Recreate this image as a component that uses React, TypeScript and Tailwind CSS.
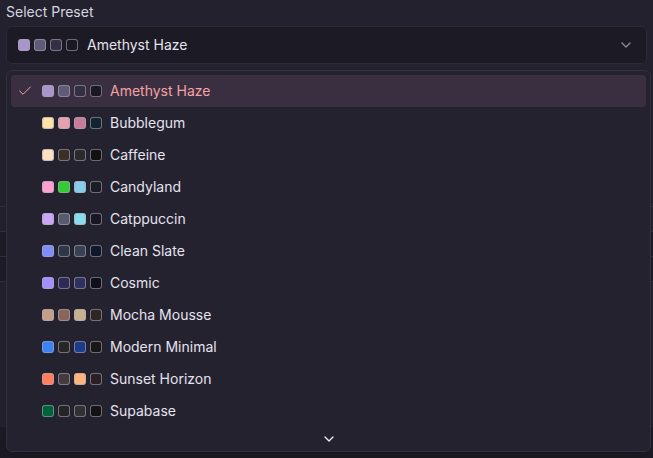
import React from "react";
import { Check, ChevronDown } from "lucide-react";

interface Preset {
  name: string;
  colors: string[];
}

const presets: Preset[] = [
  { name: "Amethyst Haze", colors: ["#a995c9", "#5f5a76", "#352f43", "#1a1823"] },
  { name: "Bubblegum", colors: ["#fbe2a7", "#e4a2b1", "#c67b96", "#12242e"] },
  { name: "Caffeine", colors: ["#ffe0c2", "#393028", "#2a2a2a", "#111111"] },
  { name: "Candyland", colors: ["#ffa0d0", "#33cc33", "#87ceeb", "#1a1d23"] },
  { name: "Catppuccin", colors: ["#cba6f7", "#585b70", "#89dceb", "#181825"] },
  { name: "Clean Slate", colors: ["#818cf8", "#2d3748", "#374151", "#0f172a"] },
  { name: "Cosmic", colors: ["#a48fff", "#2d2b55", "#303060", "#0f0f1a"] },
  { name: "Mocha Mousse", colors: ["#c39e88", "#8a655a", "#c5b08f", "#2d2521"] },
  { name: "Modern Minimal", colors: ["#3b82f6", "#262626", "#1e3a8a", "#171717"] },
  { name: "Sunset Horizon", colors: ["#ff7e5f", "#463a41", "#feb47b", "#2a2024"] },
  { name: "Supabase", colors: ["#006239", "#242424", "#313131", "#121212"] },
];

const Swatches = ({ colors }: { colors: string[] }) => (
  <div className="flex gap-1">
    {colors.map((c, i) => (
      <span
        key={i}
        className="w-3 h-3 rounded-[3px] border border-[#a9a6b5]/60"
        style={{ backgroundColor: c }}
      />
    ))}
  </div>
);

export default function App() {
  const selected = "Amethyst Haze";

  return (
    <div
      className="relative w-[653px] h-[458px] overflow-hidden bg-[#23212e] text-[#e4e2f0]"
      style={{ fontFamily: "Inter, 'Noto Sans', sans-serif" }}
    >
      {/* Label + trigger */}
      <div className="px-[6px]">
        <div className="h-[26px] pt-[2px] text-sm text-[#d6d4e0]">Select Preset</div>
        <button className="w-[641px] h-[38px] flex items-center gap-2 pl-[11px] pr-3 rounded-md border border-[#2d2a38] bg-[#1c1a24]">
          <Swatches colors={presets[0].colors} />
          <span className="text-sm ml-px">Amethyst Haze</span>
          <ChevronDown size={16} className="ml-auto text-[#8c8999]" />
        </button>
      </div>

      {/* Content behind the open menu */}
      <div className="mt-[142px] border-t border-[#33303e]" />
      <div className="mt-[24px] border-t border-[#33303e] h-[25px] bg-[#1d1b26]" />
      <div className="border-t border-[#33303e] h-[25px] bg-[#1d1b26]" />
      <div className="border-t border-[#33303e]" />
      <div className="mt-[145px] h-[40px] bg-[#1c1a24]" />

      {/* Open dropdown menu */}
      <div className="absolute left-[6px] top-[70px] w-[645px] h-[382px] rounded-md border border-[#33303f] bg-[#24222f] p-1 flex flex-col shadow-lg">
        {presets.map((p) => {
          const active = p.name === selected;
          return (
            <div
              key={p.name}
              className={`h-8 shrink-0 flex items-center gap-2 pl-[6px] rounded-[4px] text-sm ${
                active ? "bg-[#3a2f40] text-[#f4a2a6]" : "text-[#e4e2f0]"
              }`}
            >
              <span className="w-4 flex justify-center">
                {active && <Check size={16} strokeWidth={1.5} className="text-[#f4a2a6]" />}
              </span>
              <span className="ml-px">
                <Swatches colors={p.colors} />
              </span>
              <span>{p.name}</span>
            </div>
          );
        })}
        <div className="flex-1 flex items-center justify-center pt-[4px]">
          <ChevronDown size={16} className="text-[#ecebf5]" />
        </div>
      </div>
    </div>
  );
}
